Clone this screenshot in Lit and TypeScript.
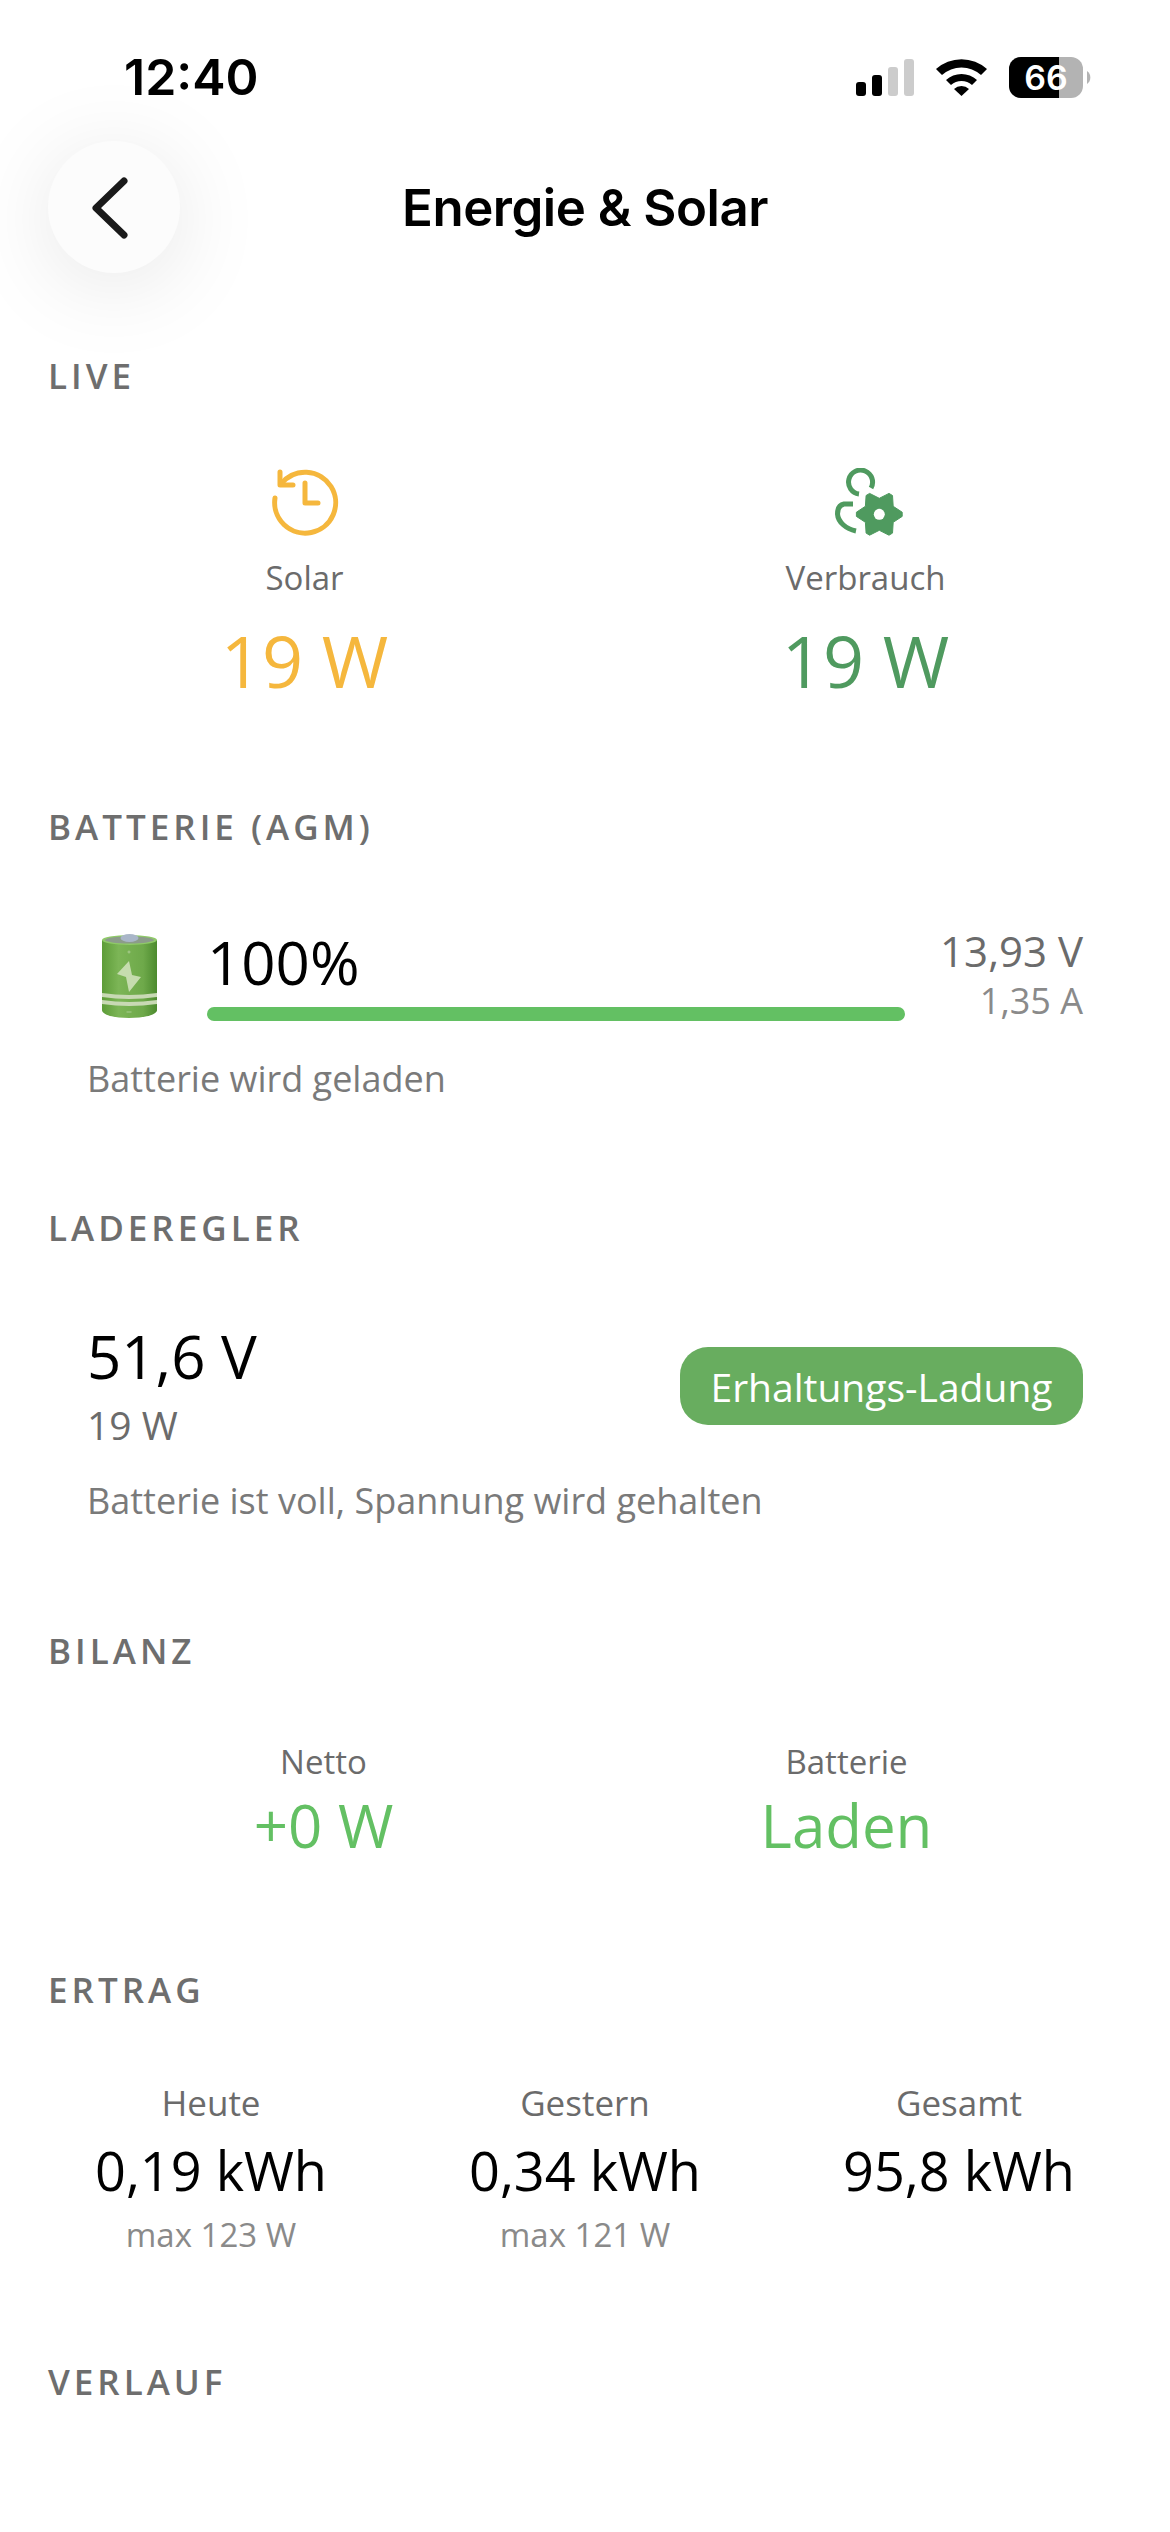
import { LitElement, html, css } from 'lit';
import { customElement } from 'lit/decorators.js';

// six-toothed gear outline for the Verbrauch icon
const gearPoints = Array.from({ length: 6 }, (_, i) => {
  const a = (i * Math.PI) / 3;
  const pt = (r: number, d: number) =>
    `${(44.3 + r * Math.cos(a + d)).toFixed(1)},${(46.3 + r * Math.sin(a + d)).toFixed(1)}`;
  return [pt(23, -0.09), pt(23, 0.09), pt(16, Math.PI / 6)].join(' ');
}).join(' ');

@customElement('app-root')
class AppRoot extends LitElement {
  static styles = css`
    :host {
      display: block;
      width: 1170px;
      height: 2532px;
      overflow: hidden;
      background: #fff;
      font-family: 'Open Sans', sans-serif;
      color: #000;
    }

    .status {
      height: 141px;
      position: relative;
      font-family: Inter, sans-serif;
    }
    .time {
      position: absolute;
      left: 124px;
      top: 50px;
      font-size: 50px;
      line-height: 54px;
      font-weight: 600;
    }
    .status-icons {
      position: absolute;
      left: 856px;
      top: 58px;
    }

    .nav {
      height: 132px;
      padding: 0 48px;
      display: flex;
      align-items: center;
      position: relative;
    }
    .back {
      width: 132px;
      height: 132px;
      border-radius: 50%;
      background: #fcfcfc;
      box-shadow: 0 12px 90px rgba(0, 0, 0, 0.1);
      display: flex;
      align-items: center;
      justify-content: center;
    }
    .back svg {
      margin-right: 8px;
    }
    .title {
      position: absolute;
      left: 0;
      right: 0;
      text-align: center;
      font-family: Inter, sans-serif;
      font-size: 51px;
      font-weight: 600;
      letter-spacing: -0.5px;
    }

    main {
      padding: 0 48px;
    }
    h2 {
      margin: 0;
      font-size: 35px;
      line-height: 46px;
      font-weight: 600;
      letter-spacing: 4px;
      color: #6e6e6e;
    }
    .sec-live {
      margin-top: 80px;
    }
    .sec-bat {
      margin-top: 95px;
    }
    .sec-reg {
      margin-top: 102px;
    }
    .sec-bil {
      margin-top: 103px;
    }
    .sec-ert {
      margin-top: 101px;
    }
    .sec-ver {
      margin-top: 102px;
    }

    .live {
      margin-top: 69px;
      display: grid;
      grid-template-columns: 1fr 1fr;
      gap: 48px;
      text-align: center;
    }
    .live svg {
      display: block;
      margin: 0 auto;
    }
    .live .gear {
      transform: translateX(3px);
    }
    .live .label {
      margin-top: 20px;
    }
    .label {
      font-size: 33px;
      line-height: 44px;
      color: #6b6b6b;
    }
    .big {
      margin-top: 11px;
      font-size: 72px;
      line-height: 98px;
    }
    .solar {
      color: #f5b73d;
    }
    .green-dark {
      color: #4f9a5f;
    }
    .green {
      color: #63c063;
    }

    .bat {
      margin-top: 84px;
      display: flex;
      align-items: flex-start;
      padding: 0 39px 0 54px;
    }
    .bat-main {
      flex: 1;
      margin: -11px 35px 0 50px;
    }
    .pct {
      font-size: 60px;
      line-height: 78px;
      margin-bottom: 6px;
    }
    .bar {
      height: 14px;
      border-radius: 7px;
      background: #63c063;
    }
    .bat-side {
      margin-top: -10px;
      text-align: right;
      color: #6b6b6b;
    }
    .volts {
      font-size: 42px;
      line-height: 54px;
    }
    .amps {
      font-size: 36px;
      line-height: 46px;
      color: #8a8a8a;
    }
    .note {
      font-size: 36px;
      line-height: 48px;
      color: #7a7a7a;
      padding-left: 39px;
    }
    .note-bat {
      margin-top: 31px;
    }
    .note-reg {
      margin-top: 26px;
    }

    .reg {
      margin-top: 66px;
      display: flex;
      justify-content: space-between;
      align-items: center;
      padding: 0 39px;
    }
    .reg-v {
      font-size: 60px;
      line-height: 78px;
    }
    .reg-w {
      margin-top: 4px;
      font-size: 39px;
      line-height: 52px;
      color: #6b6b6b;
    }
    .pill {
      width: 403px;
      height: 78px;
      margin-top: 4px;
      border-radius: 28px;
      background: #68ad5f;
      color: #fff;
      font-size: 39px;
      display: flex;
      align-items: center;
      justify-content: center;
    }

    .bilanz {
      margin-top: 66px;
      display: grid;
      grid-template-columns: 1fr 1fr;
      gap: 48px;
      padding: 0 38px;
      text-align: center;
    }
    .mid {
      font-size: 60px;
      line-height: 82px;
    }

    .ertrag {
      margin-top: 68px;
      display: grid;
      grid-template-columns: repeat(3, 1fr);
      gap: 48px;
      text-align: center;
    }
    .ertrag .label {
      font-size: 35px;
    }
    .kwh {
      margin-top: 8px;
      font-size: 54px;
      line-height: 74px;
    }
    .max {
      margin-top: 6px;
      font-size: 33px;
      line-height: 44px;
      color: #8a8a8a;
    }
  `;

  render() {
    return html`
      <div class="status">
        <div class="time">12:40</div>
        <svg class="status-icons" width="240" height="40" viewBox="0 0 240 40" overflow="visible">
          <rect x="0" y="24" width="10" height="14" rx="3" fill="#000" />
          <rect x="16" y="17" width="10" height="21" rx="3" fill="#000" />
          <rect x="32" y="9" width="10" height="29" rx="3" fill="#ccc" />
          <rect x="48" y="1" width="10" height="37" rx="3" fill="#ccc" />
          <path d="M80 11 A38 38 0 0 1 131 11 L125 17 A29 29 0 0 0 86 17 Z" fill="#000" />
          <path d="M90 22 A23 23 0 0 1 121 22 L116 27 A16 16 0 0 0 95 27 Z" fill="#000" />
          <path d="M98 31 A11 11 0 0 1 113 31 L105.500 38 Z" fill="#000" />
          <rect x="153" y="-1" width="74" height="41" rx="12" fill="#b3b3b3" />
          <path d="M165 -1 H203 V40 H165 A12 12 0 0 1 153 28 V11 A12 12 0 0 1 165 -1 Z" fill="#000" />
          <path d="M231 13 A8 8 0 0 1 231 26 Z" fill="#b3b3b3" />
          <text x="190" y="32" text-anchor="middle" font-size="34" font-weight="600" fill="#fff">66</text>
        </svg>
      </div>

      <div class="nav">
        <div class="back">
          <svg width="40" height="64" viewBox="0 0 40 64" fill="none">
            <path d="M34 6 L6 33 L34 60" stroke="#1a1a1a" stroke-width="7" stroke-linecap="round" stroke-linejoin="round" />
          </svg>
        </div>
        <div class="title">Energie &amp; Solar</div>
      </div>

      <main>
        <h2 class="sec-live">LIVE</h2>
        <div class="live">
          <div>
            <svg width="68" height="68" viewBox="0 0 68 68" fill="none" stroke="#f5b73d" stroke-width="5" stroke-linecap="round" stroke-linejoin="round">
              <path d="M4 30 A30.500 30.500 0 1 0 10 16" />
              <path d="M9 4 V17 H22" />
              <path d="M34 15 V35 H47" />
            </svg>
            <div class="label">Solar</div>
            <div class="big solar">19 W</div>
          </div>
          <div>
            <svg class="gear" width="68" height="68" viewBox="0 0 68 68" fill="none">
              <path d="M36 20 A12 12 0 1 0 24 26" stroke="#4f9a5f" stroke-width="5" />
              <path d="M18 36 H9 C4 37 2.500 41 2.500 46 C3 54 11 61 21 63" stroke="#4f9a5f" stroke-width="5" />
              <polygon points=${gearPoints} fill="#4f9a5f" stroke="#4f9a5f" stroke-width="1" stroke-linejoin="round" />
              <circle cx="44.300" cy="46.300" r="5.500" fill="#fff" />
            </svg>
            <div class="label">Verbrauch</div>
            <div class="big green-dark">19 W</div>
          </div>
        </div>

        <h2 class="sec-bat">BATTERIE (AGM)</h2>
        <div class="bat">
          <svg width="55" height="84" viewBox="0 0 55 84">
            <defs>
              <linearGradient id="body" x1="0" x2="1" y1="0" y2="0">
                <stop offset="0" stop-color="#5d9c38" />
                <stop offset="0.3" stop-color="#7cb556" />
                <stop offset="0.75" stop-color="#6ea94a" />
                <stop offset="1" stop-color="#4c8a2e" />
              </linearGradient>
            </defs>
            <path d="M0 6 H55 V76 C55 81 42 84 27 84 C12 84 0 81 0 76 Z" fill="url(#body)" />
            <ellipse cx="27.500" cy="6" rx="27.500" ry="5" fill="#8fca68" />
            <ellipse cx="27.500" cy="6" rx="24.500" ry="3.500" fill="#8c9c8a" />
            <ellipse cx="27.500" cy="4" rx="9" ry="4" fill="#a9b6c8" />
            <path d="M25.500 18 H28.500 M27 16.500 V19.500" stroke="#a9cc90" stroke-width="1" fill="none" />
            <path d="M27 27 L15 40 L24 43 L27 58 L39 43 L30 41 Z" fill="#c5dcae" />
            <path d="M0 59 Q27 63 55 59 V63 Q27 67 0 63 Z" fill="#c8d9b4" />
            <path d="M0 66 Q27 70 55 66 V70 Q27 74 0 70 Z" fill="#c8d9b4" />
            <path d="M24.500 78 H29.500" stroke="#a9cc90" stroke-width="1" fill="none" />
          </svg>
          <div class="bat-main">
            <div class="pct">100%</div>
            <div class="bar"></div>
          </div>
          <div class="bat-side">
            <div class="volts">13,93 V</div>
            <div class="amps">1,35 A</div>
          </div>
        </div>
        <div class="note note-bat">Batterie wird geladen</div>

        <h2 class="sec-reg">LADEREGLER</h2>
        <div class="reg">
          <div>
            <div class="reg-v">51,6 V</div>
            <div class="reg-w">19 W</div>
          </div>
          <div class="pill">Erhaltungs-Ladung</div>
        </div>
        <div class="note note-reg">Batterie ist voll, Spannung wird gehalten</div>

        <h2 class="sec-bil">BILANZ</h2>
        <div class="bilanz">
          <div>
            <div class="label">Netto</div>
            <div class="mid green">+0 W</div>
          </div>
          <div>
            <div class="label">Batterie</div>
            <div class="mid green">Laden</div>
          </div>
        </div>

        <h2 class="sec-ert">ERTRAG</h2>
        <div class="ertrag">
          <div>
            <div class="label">Heute</div>
            <div class="kwh">0,19 kWh</div>
            <div class="max">max 123 W</div>
          </div>
          <div>
            <div class="label">Gestern</div>
            <div class="kwh">0,34 kWh</div>
            <div class="max">max 121 W</div>
          </div>
          <div>
            <div class="label">Gesamt</div>
            <div class="kwh">95,8 kWh</div>
          </div>
        </div>

        <h2 class="sec-ver">VERLAUF</h2>
      </main>
    `;
  }
}

export default AppRoot;
